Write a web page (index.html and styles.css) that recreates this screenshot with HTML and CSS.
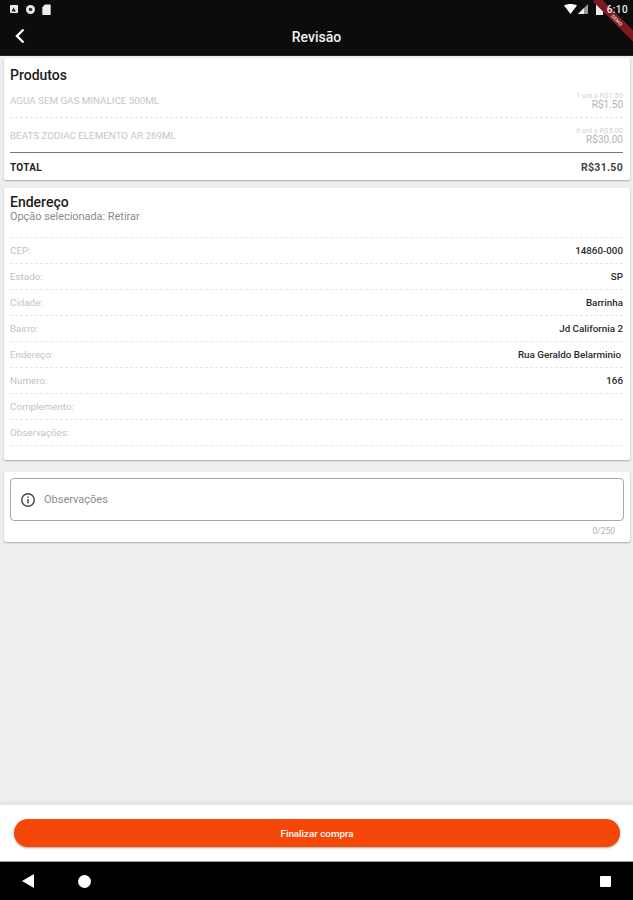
FILE: index.html
```html
<!DOCTYPE html>
<html lang="pt-BR">
<head>
  <meta charset="UTF-8">
  <title>Revisão</title>
  <link rel="stylesheet" href="styles.css">
</head>
<body>
  <div class="screen">
    <div class="status-bar">
      <div class="status-icons">
        <svg width="10" height="10" viewBox="0 0 10 10"><rect x="1" y="1" width="8" height="8" rx="1" fill="#e8e8e8"/><path d="M2.500 7.500 4.500 3.500 7 7.500z" fill="#222"/></svg>
        <svg width="11" height="11" viewBox="0 0 11 11"><circle cx="5.500" cy="5.500" r="4.500" fill="#e8e8e8"/><circle cx="5.500" cy="5.500" r="1.800" fill="#333"/></svg>
        <svg width="9" height="11" viewBox="0 0 9 11"><path d="M3 .5h5a.7.7 0 0 1 .7.7v9a.7.7 0 0 1-.7.7H1a.7.7 0 0 1-.7-.7V3.200z" fill="#eee"/></svg>
      </div>
      <div class="status-right">
        <svg width="13" height="10" viewBox="0 0 13 10"><path d="M0 1.500C3.800-.5 9.200-.5 13 1.500L6.500 10z" fill="#fff"/></svg>
        <svg width="10" height="10" viewBox="0 0 10 10"><path d="M10 0v10H0z" fill="#999"/><path d="M6 4v6H0z" fill="#eee"/></svg>
        <svg class="battery" width="7" height="12" viewBox="0 0 7 12"><path d="M2 0h3v1h2v11H0V1h2z" fill="#eee"/></svg>
        <span class="clock">6:10</span>
      </div>
    </div>
    <div class="banner"><span>DEMO</span></div>

    <header class="app-bar">
      <svg class="back" width="12" height="16" viewBox="0 0 12 16"><path d="M9.500 1.500 3 8l6.500 6.500" fill="none" stroke="#fff" stroke-width="2.400"/></svg>
      <h1>Revisão</h1>
    </header>

    <main class="content">
      <section class="card products">
        <h2>Produtos</h2>
        <div class="product dashed">
          <span class="product-name">AGUA SEM GAS MINALICE 500ML</span>
          <div class="product-price">
            <small>1 uni x R$1.50</small>
            <span>R$1.50</span>
          </div>
        </div>
        <div class="product">
          <span class="product-name">BEATS ZODIAC ELEMENTO AR 269ML</span>
          <div class="product-price">
            <small>6 uni x R$5.00</small>
            <span>R$30.00</span>
          </div>
        </div>
        <div class="total">
          <span>TOTAL</span>
          <span class="total-value">R$31.50</span>
        </div>
      </section>

      <section class="card address">
        <h2>Endereço</h2>
        <p class="option">Opção selecionada: Retirar</p>
        <div class="rows">
          <div class="row"><span>CEP:</span><b>14860-000</b></div>
          <div class="row"><span>Estado:</span><b>SP</b></div>
          <div class="row"><span>Cidade:</span><b>Barrinha</b></div>
          <div class="row"><span>Bairro:</span><b>Jd California 2</b></div>
          <div class="row"><span>Endereço:</span><b class="street">Rua Geraldo Belarminio</b></div>
          <div class="row"><span>Numero:</span><b>166</b></div>
          <div class="row"><span>Complemento:</span><b></b></div>
          <div class="row"><span>Observações:</span><b></b></div>
        </div>
      </section>

      <section class="card notes">
        <div class="notes-field">
          <svg width="16" height="16" viewBox="0 0 16 16"><circle cx="8" cy="8" r="6.300" fill="none" stroke="#444" stroke-width="1.400"/><rect x="7.300" y="7" width="1.400" height="4.500" fill="#444"/><rect x="7.300" y="4.500" width="1.400" height="1.500" fill="#444"/></svg>
          <span>Observações</span>
        </div>
        <div class="counter">0/250</div>
      </section>
    </main>

    <footer class="footer">
      <button class="buy-btn">Finalizar compra</button>
    </footer>

    <nav class="nav-bar">
      <svg width="12" height="14" viewBox="0 0 12 14"><path d="M12 0v14L0 7z" fill="#fff"/></svg>
      <svg class="nav-home" width="13" height="13" viewBox="0 0 13 13"><circle cx="6.500" cy="6.500" r="6.500" fill="#fff"/></svg>
      <svg class="nav-recent" width="11" height="11" viewBox="0 0 11 11"><rect width="11" height="11" rx="1" fill="#fff"/></svg>
    </nav>
  </div>
</body>
</html>
```

FILE: styles.css
```css
* {
  box-sizing: border-box;
}
body {
  margin: 0;
  font-family: Roboto, "Liberation Sans", sans-serif;
  background-color: #eeeeee;
}
h1, h2, p {
  margin: 0;
}
.screen {
  position: relative;
  display: flex;
  flex-direction: column;
  height: 900px;
  overflow: hidden;
}
.status-bar {
  display: flex;
  justify-content: space-between;
  align-items: center;
  height: 18px;
  padding: 0 5px 0 9px;
  background-color: #0c0c0c;
}
.status-icons,
.status-right {
  display: flex;
  align-items: center;
  gap: 6px;
}
.status-right {
  gap: 1px;
}
.battery {
  margin-left: 7px;
}
.clock {
  position: relative;
  z-index: 2;
  margin-left: 3px;
  font-size: 10px;
  font-weight: 500;
  letter-spacing: 0.4px;
  color: #eeeeee;
}
.banner {
  position: absolute;
  z-index: 1;
  top: 16px;
  right: -14px;
  width: 60px;
  height: 8px;
  background-color: #7d1a1f;
  transform: rotate(45deg);
  text-align: center;
  line-height: 8px;
}
.banner span {
  display: block;
  font-size: 5px;
  font-weight: 700;
  color: #d8c8c8;
}
.app-bar {
  position: relative;
  display: flex;
  justify-content: center;
  align-items: center;
  height: 38px;
  padding-top: 1px;
  background-color: #0c0c0c;
  border-bottom: 1px solid #222;
}
.back {
  position: absolute;
  left: 14px;
  top: 10px;
}
.app-bar h1 {
  font-size: 14px;
  font-weight: 500;
  color: #f2f2f2;
}
.content {
  flex: 1;
  padding: 2px 3px 0 4px;
}
.card {
  background: white;
  box-shadow: 0 1px 2px rgba(0, 0, 0, 0.28);
  border-radius: 2px;
}
.card h2 {
  font-size: 14px;
  font-weight: 500;
  color: #1c1c1c;
}
.products {
  height: 122px;
  padding: 9px 7px 0 6px;
}
.product {
  display: flex;
  justify-content: space-between;
  align-items: center;
  height: 35px;
}
.product.dashed {
  border-bottom: 1px dashed #e4e4e4;
}
.product:not(.dashed) {
  border-bottom: 1px solid #777;
}
.product-name {
  font-size: 9.800px;
  color: #c6c6c6;
}
.product-price {
  display: flex;
  flex-direction: column;
  align-items: flex-end;
  font-size: 10px;
  line-height: 10px;
  color: #b4b4b4;
}
.product-price small {
  font-size: 7.500px;
  line-height: 9px;
  color: #d2d2d2;
}
.total {
  display: flex;
  justify-content: space-between;
  align-items: center;
  height: 28px;
  font-size: 10px;
  font-weight: 700;
  letter-spacing: 0.3px;
  color: #222;
}
.total-value {
  font-size: 10.500px;
  color: #444;
}
.address {
  height: 272px;
  margin-top: 8px;
  padding: 6px 7px 0 6px;
}
.option {
  font-size: 10.900px;
  color: #8a8a8a;
}
.rows {
  margin-top: 14px;
  border-top: 1px dashed #e6e6e6;
}
.row {
  display: flex;
  justify-content: space-between;
  align-items: center;
  height: 26px;
  border-bottom: 1px dashed #e6e6e6;
  font-size: 9.800px;
  color: #c2c2c2;
}
.row b {
  font-weight: 500;
  color: #2a2a2a;
}
.row .street {
  margin-right: 2px;
}
.notes {
  height: 70px;
  margin-top: 12px;
  padding: 6px 6px 0 6px;
}
.notes-field {
  display: flex;
  align-items: center;
  gap: 8px;
  height: 43px;
  padding-left: 9px;
  border: 1px solid #a8a8a8;
  border-radius: 4px;
  font-size: 11px;
  color: #8c8c8c;
}
.counter {
  margin-top: 5px;
  padding-right: 9px;
  text-align: right;
  font-size: 8.500px;
  color: #b0b0b0;
}
.footer {
  display: flex;
  align-items: flex-start;
  height: 57px;
  padding: 14px 13px 0 14px;
  background: white;
  border-bottom: 1px solid #999;
  box-shadow: 0 -3px 6px rgba(0, 0, 0, 0.05);
}
.buy-btn {
  width: 100%;
  height: 28px;
  border: none;
  border-radius: 14px;
  background-color: #f44708;
  box-shadow: 0 1px 2px rgba(0, 0, 0, 0.35);
  font-family: inherit;
  font-size: 9.800px;
  font-weight: 500;
  color: #fff;
}
.nav-bar {
  display: flex;
  align-items: center;
  height: 38px;
  padding: 0 22px;
  background-color: black;
}
.nav-home {
  margin-left: 44px;
}
.nav-recent {
  margin-left: auto;
}
```
